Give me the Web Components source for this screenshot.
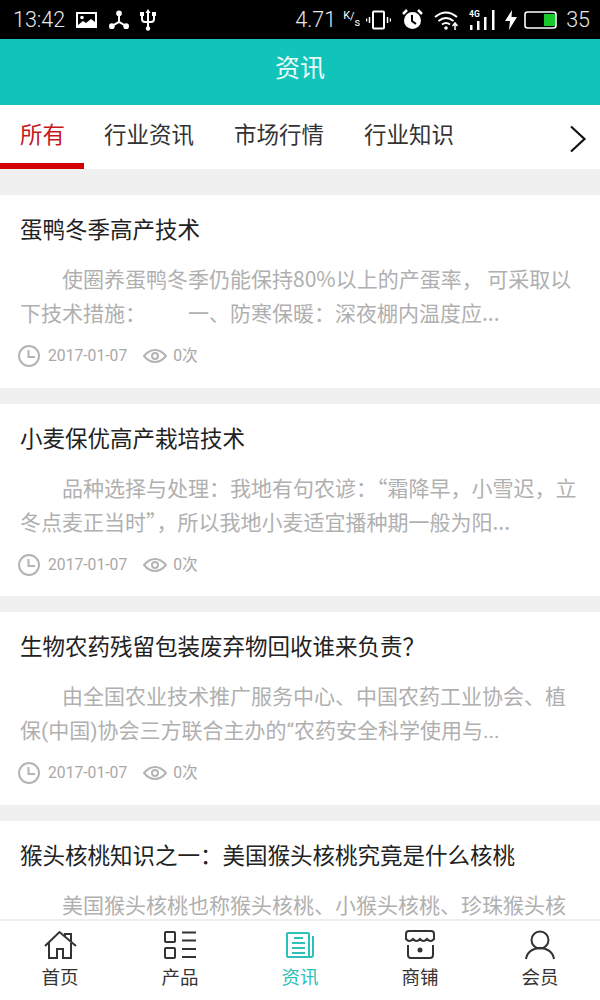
<!DOCTYPE html>
<html lang="zh">
<head>
<meta charset="utf-8">
<title>资讯</title>
<style>
html, body { margin: 0; padding: 0; background: #f0f0f0; }
body { font-family: "Noto Sans CJK SC", "Noto Sans", sans-serif; }
/* This card has the narrow latin quote and brackets in its body */
.latin-body { --body-font: Roboto, "Noto Sans CJK SC", sans-serif; --body-shift: 2px; }
</style>
</head>
<body>
<news-app>
	<status-bar slot="top"></status-bar>
	<app-header slot="top">资讯</app-header>
	<tab-strip slot="top">
		<tab-item active>所有</tab-item>
		<tab-item>行业资讯</tab-item>
		<tab-item>市场行情</tab-item>
		<tab-item>行业知识</tab-item>
	</tab-strip>
	<news-card heading="蛋鸭冬季高产技术" date="2017-01-07" views="0次">使圈养蛋鸭冬季仍能保持80%以上的产蛋率， 可采取以下技术措施：&emsp;&emsp;一、防寒保暖：深夜棚内温度应...</news-card>
	<news-card heading="小麦保优高产栽培技术" date="2017-01-07" views="0次">品种选择与处理：我地有句农谚：“霜降早，小雪迟，立冬点麦正当时”，所以我地小麦适宜播种期一般为阳...</news-card>
	<news-card class="latin-body" heading="生物农药残留包装废弃物回收谁来负责？" date="2017-01-07" views="0次">由全国农业技术推广服务中心、中国农药工业协会、植保(中国)协会三方联合主办的“农药安全科学使用与...</news-card>
	<news-card heading="猴头核桃知识之一：美国猴头核桃究竟是什么核桃">美国猴头核桃也称猴头核桃、小猴头核桃、珍珠猴头核</news-card>
	<bottom-nav slot="bottom">
		<nav-item label="首页" icon="home"></nav-item>
		<nav-item label="产品" icon="list"></nav-item>
		<nav-item label="资讯" icon="news" active></nav-item>
		<nav-item label="商铺" icon="shop"></nav-item>
		<nav-item label="会员" icon="user"></nav-item>
	</bottom-nav>
</news-app>

<script>
const icons = {
	home: `<path d="M7 17 21.500 3 38 17M27 7V5h6v8M11 14v15h8V20h6v9h8V14"/>`,
	list: `<rect x="7" y="3" width="10" height="10" rx="1"/><rect x="7" y="19" width="10" height="10" rx="1"/><path d="M24 3.500h14M24 11.500h14M24 20h14M24 28h14"/>`,
	news: `<rect x="9" y="4" width="22" height="24" rx="1"/><path d="M35 7v19a2 2 0 0 1-2 2h-2M16 9h9M14 14h13M14 19h13M14 24h13"/>`,
	shop: `<path d="M8 10V5a3 3 0 0 1 3-3h22a3 3 0 0 1 3 3v5q-3.500 4-7 0-3.500 4-7 0-3.500 4-7 0-3.500 4-7 0zM10 16v10a3 3 0 0 0 3 3h19a3 3 0 0 0 3-3V16"/><circle cx="22" cy="21" r="2.500" fill="currentColor" stroke="none"/>`,
	user: `<circle cx="22" cy="11" r="8.500"/><path d="M8 30c1-7 7-11 14-11s13 4 14 11"/>`
};

class NewsApp extends HTMLElement {
	constructor() {
		super();
		this.attachShadow({mode: 'open'}).innerHTML = `<style>
:host { display: flex; flex-direction: column; height: 1000px; overflow: hidden; background: #f0f0f0; }
#list { flex: 1; min-height: 0; overflow: hidden; display: flex; flex-direction: column; gap: 16px; padding-top: 26px; }
</style>
<slot name="top"></slot>
<div id="list"><slot></slot></div>
<slot name="bottom"></slot>`;
	}
}

class StatusBar extends HTMLElement {
	constructor() {
		super();
		this.attachShadow({mode: 'open'}).innerHTML = `<style>
:host { display: flex; align-items: center; height: 39px; padding: 0 10px 0 13px; background: #000; color: #e8e8e8; font: 300 21.500px/39px Roboto, sans-serif; }
svg { display: block; flex: none; }
#left, #right { display: flex; align-items: center; }
#left { gap: 11px; }
#right { margin-left: auto; }
#speed { display: flex; width: 13px; height: 18px; margin-left: 7px; font-size: 11px; font-weight: 400; line-height: 12px; color: #fff; }
#speed span:first-child { margin-top: -1px; }
#speed span:last-child { margin-top: 6px; }
</style>
<div id="left">
	<span>13:42</span>
	<svg width="22" height="18" viewBox="0 0 22 18"><path fill="#fff" d="M0 1h21v16H0z"/><path fill="#000" d="M2 3h17v8l-4-3-5 4-3-2-5 4z"/><circle cx="6" cy="6.500" r="1.800" fill="#fff"/></svg>
	<svg width="20" height="20" viewBox="0 0 21 20" fill="none" stroke="#fff" stroke-width="2"><path d="M10.500 3v9L3 16.500M10.500 12l7.500 4.500"/><circle cx="10.500" cy="3" r="2" fill="#fff"/><circle cx="3" cy="16.500" r="2" fill="#fff"/><circle cx="18" cy="16.500" r="2" fill="#fff"/></svg>
	<svg style="margin-left:0" width="16" height="22" viewBox="0 0 16 22" fill="none" stroke="#fff" stroke-width="2"><path d="M8 2v18M2 5v5q0 3 3 3h6q3 0 3-3V5"/><path fill="#fff" stroke="none" d="M8 0l2.500 4h-5zM0 3h4v4H0zM12 3h4v4h-4z"/><circle cx="8" cy="19.500" r="2.200" fill="#fff" stroke="none"/></svg>
</div>
<div id="right">
	<span>4.71</span>
	<div id="speed"><span>K</span><span>/</span><span>s</span></div>
	<svg style="margin-left:10px" width="25" height="20" viewBox="0 0 25 20" fill="none" stroke="#fff" stroke-width="2"><rect x="7" y="1.500" width="11" height="17" rx="1"/><path d="M3.500 7v6M21.500 7v6M.5 8.500v3M24.500 8.500v3" stroke-width="1.500"/></svg>
	<svg style="margin-left:11px" width="21" height="21" viewBox="0 0 21 21"><circle cx="10.500" cy="11.500" r="8.500" fill="#fff"/><path d="M10 6v6l4 3" fill="none" stroke="#000" stroke-width="2"/><path d="M1 5l4-4M20 5l-4-4" stroke="#fff" stroke-width="2.500"/></svg>
	<svg style="margin-left:11px" width="26" height="20" viewBox="0 0 26 20" fill="none" stroke="#fff" stroke-width="2"><path d="M1 7q11-9 22 0M4.500 11q7.500-6 15 0M8 14.500q4-3 8 0"/><circle cx="12" cy="18" r="1.800" fill="#fff" stroke="none"/><path d="M21 20v-6M18.500 16l2.500-3 2.500 3" stroke-width="1.500"/></svg>
	<svg style="margin-left:9px" width="27" height="22" viewBox="0 0 27 22"><text x="0" y="8" font-family="Roboto" font-size="8.500" font-weight="700" fill="#fff">4G</text><path fill="#fff" d="M1 16h2.500v5H1zM8 12h2.500v9H8zM15 8h2.500v13H15zM23 1h2.500v20H23z"/></svg>
	<svg style="margin-left:9px" width="12" height="20" viewBox="0 0 12 20"><path fill="#fff" d="M7 0 0 11h5l-1 9 8-13H6.500z"/></svg>
	<svg style="margin-left:7px" width="34" height="20" viewBox="0 0 34 20" fill="none"><rect x="1" y="2" width="31" height="16" rx="2.500" stroke="#fff" stroke-width="1.600"/><rect x="20" y="4" width="11" height="12" fill="#19c92b"/></svg>
	<span style="margin-left:8px">35</span>
</div>`;
	}
}

class AppHeader extends HTMLElement {
	constructor() {
		super();
		this.attachShadow({mode: 'open'}).innerHTML = `<style>
:host { display: flex; align-items: center; justify-content: center; height: 66px; padding-bottom: 13px; box-sizing: border-box; background: #12c3ba; color: #e9fbf9; font-size: 25px; }
</style><slot></slot>`;
	}
}

class TabStrip extends HTMLElement {
	constructor() {
		super();
		this.attachShadow({mode: 'open'}).innerHTML = `<style>
:host { display: flex; height: 64px; background: #fff; }
#tabs { flex: 1; display: flex; }
#more { width: 44px; display: flex; align-items: center; justify-content: center; padding-top: 3px; box-sizing: border-box; }
svg { display: block; }
</style>
<div id="tabs"><slot></slot></div>
<div id="more"><svg width="18" height="28" viewBox="0 0 18 28" fill="none" stroke="#111" stroke-width="2.200"><path d="M2 1.500 15.500 14 2 26.500"/></svg></div>`;
	}
}

class TabItem extends HTMLElement {
	constructor() {
		super();
		this.attachShadow({mode: 'open'}).innerHTML = `<style>
:host { display: block; box-sizing: border-box; height: 64px; padding: 0 20px; color: #333; font-size: 22.500px; line-height: 56px; }
:host([active]) { width: 84px; padding-right: 0; color: #c8161d; border-bottom: 6px solid #d40000; }
</style><slot></slot>`;
	}
}

class NewsCard extends HTMLElement {
	constructor() {
		super();
		const root = this.attachShadow({mode: 'open'});
		root.innerHTML = `<style>
:host { display: block; flex: none; box-sizing: border-box; height: 192.500px; padding: 15px 20px 0; background: #fff; }
h2 { margin: 0; font-size: 22.500px; font-weight: 400; line-height: 36px; color: #222; white-space: nowrap; }
p { margin: calc(15px + var(--body-shift, 0px)) 0 calc(0px - var(--body-shift, 0px)); font-family: var(--body-font, inherit); font-size: 21px; line-height: 34px; color: #b0b0b0; text-indent: 2em; }
#meta { display: flex; align-items: center; margin: 15px 0 0 -2px; color: #a8a8a8; font: 15.700px/24px Roboto, "Noto Sans CJK SC", sans-serif; }
#meta[hidden] { display: none; }
svg { display: block; flex: none; }
</style>
<h2></h2>
<p><slot></slot></p>
<div id="meta" hidden>
	<svg width="22" height="22" viewBox="0 0 22 22" fill="none" stroke="#b4b4b4" stroke-width="2"><circle cx="11" cy="11" r="10"/><path d="M10.500 5v7H17"/></svg>
	<span id="date" style="margin-left:8px"></span>
	<svg style="margin-left:16px" width="24" height="14" viewBox="0 0 24 14" fill="none" stroke="#b4b4b4" stroke-width="2"><path d="M1 7q5-6 11-6t11 6q-5 6-11 6T1 7z"/><circle cx="12" cy="7" r="3"/></svg>
	<span id="views" style="margin-left:6px"></span>
</div>`;
		root.querySelector('h2').textContent = this.getAttribute('heading');
		if (this.hasAttribute('date')) {
			root.getElementById('date').textContent = this.getAttribute('date');
			root.getElementById('views').textContent = this.getAttribute('views');
			root.getElementById('meta').hidden = false;
		}
	}
}

class BottomNav extends HTMLElement {
	constructor() {
		super();
		this.attachShadow({mode: 'open'}).innerHTML = `<style>
:host { display: grid; grid-template-columns: repeat(5, 1fr); height: 81px; box-sizing: border-box; background: #fff; border-top: 2px solid #eee; }
</style><slot></slot>`;
	}
}

class NavItem extends HTMLElement {
	constructor() {
		super();
		const root = this.attachShadow({mode: 'open'});
		root.innerHTML = `<style>
:host { display: flex; flex-direction: column; align-items: center; color: #333; font-size: 18.500px; line-height: 26px; padding-top: 8px; }
:host([active]) { color: #2cc0b6; }
svg { display: block; }
span { margin-top: 2px; }
</style>
<svg width="44" height="32" viewBox="0 0 44 32" fill="none" stroke="currentColor" stroke-width="2">${icons[this.getAttribute('icon')]}</svg>
<span></span>`;
		root.querySelector('span').textContent = this.getAttribute('label');
	}
}

customElements.define('news-app', NewsApp);
customElements.define('status-bar', StatusBar);
customElements.define('app-header', AppHeader);
customElements.define('tab-strip', TabStrip);
customElements.define('tab-item', TabItem);
customElements.define('news-card', NewsCard);
customElements.define('bottom-nav', BottomNav);
customElements.define('nav-item', NavItem);
</script>
</body>
</html>
